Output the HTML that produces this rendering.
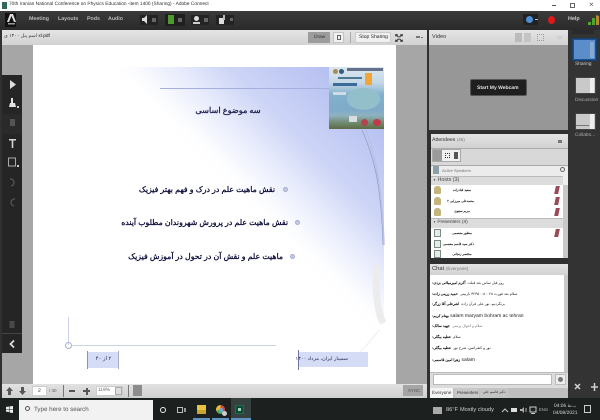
<!DOCTYPE html>
<html><head><meta charset="utf-8">
<style>
*{margin:0;padding:0;box-sizing:border-box}
html,body{width:600px;height:420px;overflow:hidden;background:#2e2e2e;font-family:"Liberation Sans","Noto Sans CJK SC",sans-serif;text-rendering:geometricPrecision}
.a{position:absolute}
.t{position:absolute;white-space:nowrap;line-height:1}
.rtl{direction:rtl}
.hdr{background:linear-gradient(#e4e4e4,#d2d2d2)}
.c{position:absolute;left:432px;white-space:nowrap;line-height:1;font-size:3.700px;color:#222;direction:ltr}
.c b{display:inline-block;direction:rtl;color:#000}
.c i{display:inline-block;direction:rtl;font-style:normal;margin-left:1px}
.n{position:absolute;left:450px;width:24px;text-align:center;direction:rtl;white-space:nowrap;line-height:1;font-size:3.200px;font-weight:bold;color:#111}
.p{position:absolute;left:555px;width:4px;height:8px;background:#9a4a58;transform:skewX(-12deg)}
.l{position:absolute;left:434px;width:7px;height:8px;background:#c4b67a;border-radius:3px 3px 1px 1px}
.d{position:absolute;left:434px;width:7px;height:8px;background:#e6ebe6;border:1px solid #7b8c85}
</style></head><body>
<div class="a" style="left:0;top:0;width:600px;height:420px;background:#303030;overflow:hidden;filter:blur(.35px)">

<!-- title bar -->
<div class="a" style="left:0;top:0;width:600px;height:11px;background:#fff"></div>
<div class="a" style="left:2px;top:2px;width:5px;height:7px;background:#2d6a5c"></div>
<div class="t" style="left:9px;top:3px;font-size:4.800px;color:#333">70th Iranian National Conference on Physics Education -item 1400 (Sharing) - Adobe Connect</div>
<div class="a" style="left:552px;top:5px;width:4px;height:1px;background:#555"></div>
<div class="a" style="left:570px;top:3px;width:5px;height:5px;border:1px solid #666"></div>
<div class="t" style="left:589px;top:1px;font-size:8px;color:#555">×</div>

<!-- top toolbar -->
<div class="a" style="left:0;top:11px;width:600px;height:19px;background:linear-gradient(#3a3a3a,#2a2a2a)"></div>
<div class="a" style="left:5px;top:13px;width:11px;height:14px;background:#111"></div>
<svg class="a" style="left:6px;top:13px" width="11" height="12" viewBox="0 0 11 12"><path d="M1 9 L4 1 H7 L10 9 H8 L5.500 3 L3 9Z" fill="#ddd"/><rect x="2" y="10" width="7" height="1.500" fill="#999"/></svg>
<div class="t" style="left:29px;top:17px;font-size:5.300px;font-weight:bold;color:#bbb">Meeting</div>
<div class="t" style="left:58px;top:17px;font-size:5.300px;font-weight:bold;color:#bbb">Layouts</div>
<div class="t" style="left:87px;top:17px;font-size:5.300px;font-weight:bold;color:#bbb">Pods</div>
<div class="t" style="left:108px;top:17px;font-size:5.300px;font-weight:bold;color:#bbb">Audio</div>

<div class="a" style="left:140px;top:15px;width:18px;height:10px;background:#232323"></div>
<svg class="a" style="left:142px;top:15px" width="6" height="9" viewBox="0 0 6 9"><path d="M0 3H2L5 0V9L2 6H0Z" fill="#ddd"/></svg>
<div class="a" style="left:152px;top:18px;width:4px;height:4px;background:#666"></div>

<div class="a" style="left:165px;top:14px;width:20px;height:12px;background:#1f1f1f"></div>
<div class="a" style="left:168px;top:15px;width:6px;height:9px;background:#4e9a32"></div>
<div class="a" style="left:178px;top:18px;width:4px;height:4px;background:#666"></div>

<div class="a" style="left:191px;top:15px;width:18px;height:10px;background:#232323"></div>
<div class="a" style="left:194px;top:16px;width:5px;height:5px;border-radius:50%;background:#ddd"></div>
<div class="a" style="left:193px;top:22px;width:7px;height:1.500px;background:#ccc"></div>
<div class="a" style="left:204px;top:18px;width:4px;height:4px;background:#666"></div>

<div class="a" style="left:216px;top:15px;width:18px;height:10px;background:#232323"></div>
<div class="a" style="left:219px;top:18px;width:5px;height:6px;background:#ddd"></div>
<div class="a" style="left:223px;top:15px;width:2px;height:5px;background:#bbb"></div>
<div class="a" style="left:230px;top:18px;width:3px;height:3px;background:#666"></div>

<div class="a" style="left:523px;top:14px;width:15px;height:11px;background:#222"></div>
<div class="a" style="left:526px;top:16px;width:7px;height:7px;border-radius:50%;background:#4d8ed8"></div>
<div class="a" style="left:535px;top:19px;width:3px;height:1px;background:#bbb"></div>
<div class="a" style="left:548px;top:16px;width:7px;height:8px;border-radius:50%;background:#e01818"></div>
<div class="t" style="left:568px;top:17px;font-size:5.400px;font-weight:bold;color:#ccc">Help</div>
<svg class="a" style="left:588px;top:15px" width="11" height="10" viewBox="0 0 11 10"><path d="M0 10H3V7H0ZM4 10H7V3H4Z" fill="#4ea52e"/><path d="M8 10H11V1L8 0Z" fill="#b98a2a"/></svg>

<!-- share pod header -->
<div class="a hdr" style="left:2px;top:30px;width:425px;height:15px"></div>
<div class="t" style="left:4px;top:35px;width:44px;font-size:4.800px;color:#333">اسم پنل ۱۴۰۰ ی <span style="color:#111">xl.pdf</span></div>
<div class="a" style="left:308px;top:32px;width:22px;height:11px;background:#9c9c9c"></div>
<div class="t" style="left:314px;top:35.500px;font-size:4.800px;color:#333">Draw</div>
<div class="a" style="left:333px;top:32px;width:11px;height:11px;background:#f0f0f0;border:1px solid #c4c4c4"></div>
<div class="a" style="left:337px;top:35px;width:4px;height:5px;border:1px solid #666"></div>
<div class="a" style="left:350px;top:32px;width:1px;height:11px;background:#aaa"></div>
<div class="a" style="left:355px;top:32px;width:36px;height:11px;background:#f0f0f0;border:1px solid #ccc"></div>
<div class="t" style="left:359px;top:35px;font-size:5px;color:#222">Stop Sharing</div>
<svg class="a" style="left:394px;top:33px" width="10" height="10" viewBox="0 0 12 11"><path d="M1 1h4l-1 1 2 2-1 1-2-2-1 1ZM11 1h-4l1 1-2 2 1 1 2-2 1 1ZM1 10h4l-1-1 2-2-1-1-2 2-1-1ZM11 10h-4l1-1-2-2 1-1 2 2 1-1Z" fill="#333"/></svg>
<div class="a" style="left:416px;top:36px;width:4px;height:2px;background:#777"></div>
<div class="a" style="left:421px;top:37px;width:2px;height:1px;background:#777"></div>

<!-- share pod content -->
<div class="a" style="left:2px;top:45px;width:425px;height:339px;background:#a6a6a6"></div>
<div class="a" style="left:33px;top:45px;width:363px;height:339px;background:#fff;overflow:hidden">
  <div class="a" style="left:24px;top:22px;width:327px;height:290px;background:linear-gradient(225deg,#a9b4ef 0,#cdd5f6 110px,#e6eafb 145px,#fbfcff 178px,#fff 192px)"></div>
  <div class="a" style="left:127px;top:43px;width:170px;height:1px;background:#a7b0dc"></div>
  <!-- logo -->
  <div class="a" style="left:296px;top:22px;width:55px;height:62px;background:linear-gradient(#dbe6ef 0%,#c4d7e6 25%,#82b0cb 45%,#7faac8 70%,#8fb2c0 78%,#6f8a70 90%,#5e6b45 100%)"></div>
  <div class="a" style="left:314px;top:23px;width:36px;height:3px;background:#66708a"></div>
  <div class="a" style="left:332px;top:28px;width:7px;height:12px;background:#f0a535"></div>
  <div class="a" style="left:300px;top:24px;width:5px;height:5px;border-radius:50%;background:#a98c56"></div>
  <div class="a" style="left:306px;top:24px;width:5px;height:5px;border-radius:50%;background:#345d82"></div>
  <div class="a" style="left:305px;top:32px;width:24px;height:2px;background:#4d7892"></div>
  <div class="a" style="left:300px;top:38px;width:24px;height:3px;background:#3c6a98"></div>
  <div class="a" style="left:300px;top:47px;width:13px;height:3px;background:#cfdbe8"></div>
  <div class="a" style="left:314px;top:43px;width:33px;height:22px;border-radius:50%;background:#93bfca"></div>
  <div class="a" style="left:328px;top:74px;width:7px;height:7px;border-radius:50%;background:#b4444d"></div>
  <div class="a" style="left:340px;top:74px;width:8px;height:7px;border-radius:50%;background:#c23a48"></div>
  <div class="a" style="left:316px;top:71px;width:8px;height:6px;background:#d9dde0"></div>
  <!-- wave curves -->
  <svg class="a" style="left:280px;top:80px" width="83" height="240" viewBox="0 0 83 240" fill="none">
    <path d="M49 5C60 30 68 55 70 120" stroke="#8f9ac4" stroke-width=".7"/>
    <path d="M53 5C62 30 69 60 71 120" stroke="#b9c1e4" stroke-width="1.500"/>
    <path d="M64 140C62 165 64 185 70 198" stroke="#ececec" stroke-width="7"/>
    <path d="M66 205C55 220 44 230 32 240" stroke="#f4f4f4" stroke-width="1.500"/>
  </svg>
  <!-- text -->
  <div class="t rtl" style="left:145px;top:62px;width:100px;text-align:center;font-family:'Liberation Serif','Noto Serif CJK SC',serif;font-size:8.200px;font-weight:bold;color:#2a2a55">سه موضوع اساسی</div>
  <div class="t rtl" style="right:121px;top:141px;font-size:7.800px;font-weight:bold;color:#14143f">نقش ماهیت علم در درک و فهم بهتر فیزیک</div>
  <div class="a" style="left:250px;top:142px;width:5px;height:5px;border-radius:50%;background:#c4cbe4;border:1px solid #a5adcf"></div>
  <div class="t rtl" style="right:108px;top:174px;font-size:7.800px;font-weight:bold;color:#14143f">نقش ماهیت علم در پرورش شهروندان مطلوب آینده</div>
  <div class="a" style="left:262px;top:175px;width:5px;height:5px;border-radius:50%;background:#c4cbe4;border:1px solid #a5adcf"></div>
  <div class="t rtl" style="right:113px;top:208px;font-size:7.800px;font-weight:bold;color:#14143f">ماهیت علم و نقش آن در تحول در آموزش فیزیک</div>
  <div class="a" style="left:257px;top:209px;width:5px;height:5px;border-radius:50%;background:#c4cbe4;border:1px solid #a5adcf"></div>
  <!-- bottom guides -->
  <div class="a" style="left:35px;top:272px;width:1px;height:28px;background:#cdd2e6"></div>
  <div class="a" style="left:38px;top:300px;width:205px;height:1px;background:#ccd2e6"></div>
  <div class="a" style="left:32px;top:297px;width:7px;height:7px;border-radius:50%;border:1px solid #a9b2d4"></div>
  <div class="a" style="left:54px;top:307px;width:31px;height:16px;background:#d5ddf6"></div>
  <div class="a" style="left:54px;top:306px;width:1px;height:18px;background:#8a92b8"></div>
  <div class="a" style="left:85px;top:306px;width:1px;height:18px;background:#aab0cc"></div>
  <div class="t rtl" style="left:57px;top:312px;width:27px;text-align:center;font-size:5.400px;color:#2a2a55">۲ از ۴۰</div>
  <div class="a" style="left:266px;top:307px;width:69px;height:15px;background:#d5ddf6"></div>
  <div class="a" style="left:265px;top:305px;width:1px;height:20px;background:#6f77a5"></div>
  <div class="t rtl" style="left:270px;top:312px;width:45px;text-align:center;font-size:5px;color:#2a2a55">سمینار ایران، مرداد ۱۴۰۰</div>
</div>

<!-- left tool strip -->
<div class="a" style="left:2px;top:75px;width:20px;height:278px;background:#252525"></div>
<div class="a" style="left:2px;top:114px;width:20px;height:20px;background:#2a2a2a"></div>
<svg class="a" style="left:2px;top:74px" width="20" height="280" viewBox="0 0 20 280">
  <path d="M8 6L14 10.500L8 15Z" fill="#ddd"/>
  <path d="M9 24h2v5h2l1 4H7l1-4h1Z" fill="#e2e2e2"/><rect x="15" y="32" width="2" height="2" fill="#ccc"/>
  <rect x="8" y="45" width="5" height="7" fill="#555"/>
  <path d="M7 65H14V66.500H11.300V74H9.700V66.500H7Z" fill="#d4d4d4"/>
  <rect x="6.500" y="84" width="7" height="8" fill="none" stroke="#aaa" stroke-width="1"/><rect x="15" y="91" width="2" height="2" fill="#ccc"/>
  <path d="M8 105A3.500 3.500 0 1 1 9 112" fill="none" stroke="#555" stroke-width="1.300"/>
  <path d="M13 125A3.500 3.500 0 1 0 12 132" fill="none" stroke="#555" stroke-width="1.300"/>
  <rect x="7.500" y="247" width="5" height="7" fill="#4a4a4a"/>
  <path d="M12 266.500L8.500 270L12 273.500" fill="none" stroke="#ddd" stroke-width="1.800"/>
</svg>
<div class="a" style="left:2px;top:333px;width:20px;height:1px;background:#444"></div>

<!-- share bottom controls -->
<div class="a" style="left:2px;top:384px;width:425px;height:14px;background:linear-gradient(#e2e2e2,#cfcfcf)"></div>
<svg class="a" style="left:5px;top:386px" width="22" height="10" viewBox="0 0 22 10"><path d="M4.500 1L8 5H6V9H3V5H1Z" fill="#555"/><path d="M17.500 9L21 5H19V1H16V5H14Z" fill="#555"/></svg>
<div class="a" style="left:32px;top:386px;width:15px;height:10px;background:#fff;border:1px solid #ccc"></div>
<div class="t" style="left:38px;top:388.500px;font-size:5px;color:#333">2</div>
<div class="t" style="left:49px;top:389px;font-size:4.500px;color:#555">/ 40</div>
<div class="a" style="left:63px;top:385px;width:1px;height:12px;background:#777"></div>
<div class="a" style="left:69px;top:390px;width:6px;height:2px;background:#555"></div>
<div class="a" style="left:83px;top:390px;width:7px;height:2px;background:#555"></div>
<div class="a" style="left:85.500px;top:387.500px;width:2px;height:7px;background:#555"></div>
<div class="a" style="left:96px;top:386px;width:27px;height:10px;background:#fff;border:1px solid #ccc"></div>
<div class="t" style="left:98px;top:389px;font-size:4.800px;color:#666">119%</div>
<div class="a" style="left:115px;top:387px;width:7px;height:8px;background:#ddd;border:1px solid #aaa"></div>
<div class="a" style="left:128px;top:385px;width:1px;height:12px;background:#777"></div>
<div class="a" style="left:133px;top:385px;width:9px;height:11px;background:#8c8c8c"></div>
<div class="a" style="left:403px;top:385px;width:20px;height:11px;background:#a5a5a5"></div>
<div class="t" style="left:408px;top:389px;font-size:4.400px;color:#555">SYNC</div>

<!-- video pod -->
<div class="a hdr" style="left:429px;top:30px;width:139px;height:15px"></div>
<div class="t" style="left:432px;top:35px;font-size:5.600px;color:#333">Video</div>
<div class="a" style="left:515px;top:33px;width:7px;height:9px;background:#bbb"></div>
<div class="a" style="left:524px;top:33px;width:7px;height:9px;background:#c4c4c4"></div>
<div class="a" style="left:537px;top:34px;width:7px;height:7px;border:1px dotted #999"></div>
<div class="a" style="left:557px;top:36px;width:5px;height:3px;background:#d0d0d0"></div>
<div class="a" style="left:429px;top:45px;width:139px;height:85px;background:#979797"></div>
<div class="a" style="left:471px;top:80px;width:55px;height:15px;background:#1f1f1f;border-radius:1px;box-shadow:0 0 0 1px #555"></div>
<div class="t" style="left:477px;top:85.500px;font-size:5px;font-weight:bold;color:#e0e0e0">Start My Webcam</div>

<!-- attendees -->
<div class="a hdr" style="left:431px;top:134px;width:137px;height:14px"></div>
<div class="t" style="left:432px;top:138px;font-size:5.200px;color:#333">Attendees <span style="font-size:4.500px;color:#777">(46)</span></div>
<div class="a" style="left:558px;top:140px;width:4px;height:3px;background:#777"></div>
<div class="a" style="left:431px;top:148px;width:137px;height:17px;background:#d8d8d8;border-top:1px solid #aaa"></div>
<div class="a" style="left:432px;top:149px;width:29px;height:13px;background:#f0f0f0;border:1px solid #aaa"></div>
<div class="a" style="left:433px;top:150px;width:9px;height:11px;background:#9a9a9a"></div>
<div class="a" style="left:445px;top:153px;width:5px;height:5px;border:1px dotted #333"></div>
<div class="a" style="left:454px;top:152px;width:4px;height:7px;background:#555"></div>
<div class="a" style="left:431px;top:165px;width:137px;height:11px;background:#ececec;border-top:1px solid #aaa"></div>
<div class="a" style="left:433px;top:166px;width:6px;height:8px;background:#8ca0a8"></div>
<div class="t" style="left:442px;top:169px;font-size:4px;color:#777">Active Speakers</div>
<div class="a" style="left:560px;top:167px;width:5px;height:5px;border:1px solid #666;border-radius:50%"></div>

<div class="a" style="left:431px;top:176px;width:137px;height:82px;background:#fff"></div>
<div class="a" style="left:431px;top:176px;width:132px;height:9px;background:#dcdcdc;border-top:1px solid #bbb"></div>
<div class="t" style="left:433px;top:178px;font-size:5.400px;color:#444"><span style="font-size:3px">▼</span> Hosts (3)</div>
<div class="a" style="left:563px;top:176px;width:5px;height:82px;background:#c8c8c8"></div>
<div class="a" style="left:563px;top:176px;width:5px;height:9px;background:#eee"></div>
<div class="a" style="left:431px;top:218px;width:132px;height:10px;background:#dcdcdc;border-top:1px solid #bbb"></div>
<div class="t" style="left:433px;top:221px;font-size:4.800px;color:#444"><span style="font-size:3px">▼</span> Presenters (4)</div>

<div class="l" style="top:186px"></div>
<div class="n" style="top:189px">سعید قنادزاده</div>
<div class="p" style="top:186px"></div>
<div class="l" style="top:197px"></div>
<div class="n" style="top:200px">محمدعلی میرزایی ۲</div>
<div class="p" style="top:197px"></div>
<div class="l" style="top:208px"></div>
<div class="n" style="top:210px">مریم صفوی</div>
<div class="p" style="top:208px"></div>

<div class="d" style="top:229px"></div>
<div class="n" style="top:232px">منظور معصمی</div>
<div class="p" style="top:229px"></div>
<div class="d" style="top:240px"></div>
<div class="n" style="top:243px">دکتر سید قاسم معصمی</div>
<div class="d" style="top:250px"></div>
<div class="n" style="top:253px">مختصر زنجانی</div>

<!-- chat -->
<div class="a hdr" style="left:430px;top:264px;width:138px;height:11px"></div>
<div class="t" style="left:432px;top:267px;font-size:5.800px;color:#333">Chat <span style="font-size:4.600px;color:#777">(Everyone)</span></div>
<div class="a" style="left:430px;top:275px;width:138px;height:97px;background:#fff"></div>
<div class="a" style="left:564px;top:275px;width:4px;height:97px;background:#c8c8c8"></div>
<div class="c" style="top:282px"><b>آکرم امیرمیلانی بزدی:</b> <i>روز قبل تماس بعد قبلت</i></div>
<div class="c" style="top:293px"><b>حمید زرینی زاده:</b> <i>سلام بعد فورت ۴۲۳۵۰۰۸۰۰۲۸ بازبینی</i></div>
<div class="c" style="top:303px"><b>اشرعلی آقا زرگر:</b> <i>برنگردیم، نور علی قرآن زاده</i></div>
<div class="c" style="top:314px;font-size:5px"><b style="font-size:3.700px">بهنام کریم:</b> salam maryam bohram ac tehran</div>
<div class="c" style="top:325px"><b>جهید سالک:</b> <i style="color:#777">سلام و احوال پرسی</i></div>
<div class="c" style="top:336px"><b>عطیه بیگلی:</b> <i>سلام</i></div>
<div class="c" style="top:347px"><b>عطیه بیگلی:</b> <i>نور و کنفرانس، شرح نور</i></div>
<div class="c" style="top:358px;font-size:5px"><b style="font-size:3.700px">زهرا امین قاسمی:</b> salam</div>
<div class="a" style="left:430px;top:372px;width:138px;height:16px;background:#dcdcdc;border-top:1px solid #bbb"></div>
<div class="a" style="left:433px;top:374px;width:119px;height:11px;background:#fff;border:1px solid #bbb"></div>
<div class="a" style="left:555px;top:374px;width:11px;height:11px;background:#eee;border:1px solid #bbb"></div>
<div class="a" style="left:558px;top:377px;width:5px;height:5px;border-radius:50%;background:#777"></div>
<div class="a" style="left:430px;top:388px;width:138px;height:10px;background:#bfbfbf"></div>
<div class="a" style="left:430px;top:388px;width:23px;height:10px;background:#f4f4f4"></div>
<div class="t" style="left:432px;top:391px;font-size:4.600px;color:#333">Everyone</div>
<div class="a" style="left:455px;top:388px;width:24px;height:10px;background:#c8c8c8"></div>
<div class="t" style="left:457px;top:391px;font-size:4.400px;color:#333">Presenters</div>
<div class="a" style="left:480px;top:388px;width:28px;height:10px;background:#c4c4c4"></div>
<div class="t rtl" style="left:481px;top:391px;width:26px;font-size:3.600px;color:#333;text-align:center">دکتر قاسم جلی</div>

<!-- right rail -->
<div class="a" style="left:568px;top:30px;width:32px;height:368px;background:#333"></div>
<div class="a" style="left:573px;top:39px;width:23px;height:21px;background:#5c8dcb;border:1px solid #1e4f8f;box-shadow:0 0 0 1px #16416f"></div>
<div class="a" style="left:590px;top:42px;width:4px;height:16px;background:#88a8d0"></div>
<div class="t" style="left:575px;top:63px;font-size:4.800px;color:#ccc">Sharing</div>
<div class="a" style="left:575px;top:77px;width:21px;height:17px;background:#c9c9c9;border:1px solid #444"></div>
<div class="a" style="left:590px;top:78px;width:4px;height:15px;background:#eee"></div>
<div class="t" style="left:575px;top:99px;font-size:4.800px;color:#aaa">Discussion</div>
<div class="a" style="left:575px;top:113px;width:21px;height:17px;background:#c9c9c9;border:1px solid #444"></div>
<div class="a" style="left:590px;top:114px;width:4px;height:15px;background:#eee"></div>
<div class="a" style="left:576px;top:125px;width:13px;height:1px;background:#777"></div>
<div class="t" style="left:575px;top:134px;font-size:4.800px;color:#aaa">Collabo...</div>
<div class="a" style="left:572px;top:30px;width:22px;height:4px;background:#2a2a2a"></div>
<svg class="a" style="left:574px;top:382px" width="24" height="10" viewBox="0 0 24 10"><path d="M1 1L6 6M6 1L1 6" stroke="#d0d0d0" stroke-width="1.500" transform="translate(0,1)"/><path d="M17 5H24M20.500 1V9" stroke="#d0d0d0" stroke-width="1.500"/></svg>

<!-- taskbar -->
<div class="a" style="left:0;top:398px;width:600px;height:22px;background:#1c2120"></div>
<svg class="a" style="left:6px;top:406px" width="7" height="7" viewBox="0 0 7 7"><path d="M0 1L3 .5V3H0ZM3.500 .4L7 0V3H3.500ZM0 3.500H3V6L0 5.600ZM3.500 3.500H7V7L3.500 6.500Z" fill="#eee"/></svg>
<div class="a" style="left:19px;top:400px;width:134px;height:20px;background:#f2f2f2"></div>
<div class="a" style="left:25px;top:406px;width:5px;height:5px;border:1px solid #555;border-radius:50%"></div>
<div class="t" style="left:34px;top:407px;font-size:6.200px;color:#555">Type here to search</div>
<div class="a" style="left:160px;top:407px;width:6px;height:6px;border:1.500px solid #eee;border-radius:50%"></div>
<div class="a" style="left:177px;top:407px;width:6px;height:6px;border:1px solid #bbb"></div>
<div class="a" style="left:184px;top:408px;width:2px;height:4px;background:#999"></div>
<div class="a" style="left:197px;top:405px;width:9px;height:9px;background:#e8c343"></div>
<div class="a" style="left:197px;top:410px;width:9px;height:4px;background:#c8a52c"></div>
<div class="a" style="left:193px;top:418px;width:17px;height:2px;background:#5d93c2"></div>
<div class="a" style="left:216px;top:405px;width:9px;height:9px;border-radius:50%;background:conic-gradient(#d24b3c 0 35%,#4da75b 35% 70%,#e2c23c 70%)"></div>
<div class="a" style="left:219px;top:408px;width:4px;height:4px;border-radius:50%;background:#6fa7d8"></div>
<div class="a" style="left:222px;top:411px;width:5px;height:5px;border-radius:50%;background:#ccc"></div>
<div class="a" style="left:212px;top:418px;width:17px;height:2px;background:#5d93c2"></div>
<div class="a" style="left:231px;top:398px;width:20px;height:22px;background:#36403e"></div>
<div class="a" style="left:235px;top:405px;width:9px;height:9px;background:#0f4a34;border:1px solid #1b6d4c"></div>
<div class="a" style="left:238px;top:408px;width:3px;height:3px;background:#9fd4bb"></div>
<div class="a" style="left:231px;top:418px;width:20px;height:2px;background:#5d93c2"></div>

<div class="a" style="left:433px;top:407px;width:9px;height:7px;background:#a9a9a9"></div>
<div class="t" style="left:446px;top:408px;font-size:5.600px;color:#cfcfcf">86°F</div>
<div class="t" style="left:460px;top:408px;font-size:5.600px;color:#cfcfcf">Mostly cloudy</div>
<svg class="a" style="left:500px;top:406px" width="38" height="8" viewBox="0 0 38 8"><path d="M2 6L5 3L8 6" fill="none" stroke="#ccc"/><rect x="11" y="2" width="6" height="4" fill="#ddd"/><path d="M20 3H22L24 1V7L22 5H20Z" fill="#aaa"/><path d="M26 2V6" stroke="#aaa"/><rect x="30" y="1" width="6" height="5" fill="none" stroke="#ccc"/><path d="M31 7.500H35" stroke="#ccc"/></svg>
<div class="t" style="left:539px;top:408px;font-size:4.200px;color:#bbb">ENG</div>
<div class="t" style="left:554px;top:403.500px;font-size:4.900px;color:#d2d2d2">04:06 <span style="font-size:4px">ب.ظ</span></div>
<div class="t" style="left:553px;top:412px;font-size:4.900px;color:#d2d2d2">04/08/2021</div>
<div class="a" style="left:584px;top:405px;width:7px;height:8px;border:1px solid #ccc"></div>
</div>
</body></html>
